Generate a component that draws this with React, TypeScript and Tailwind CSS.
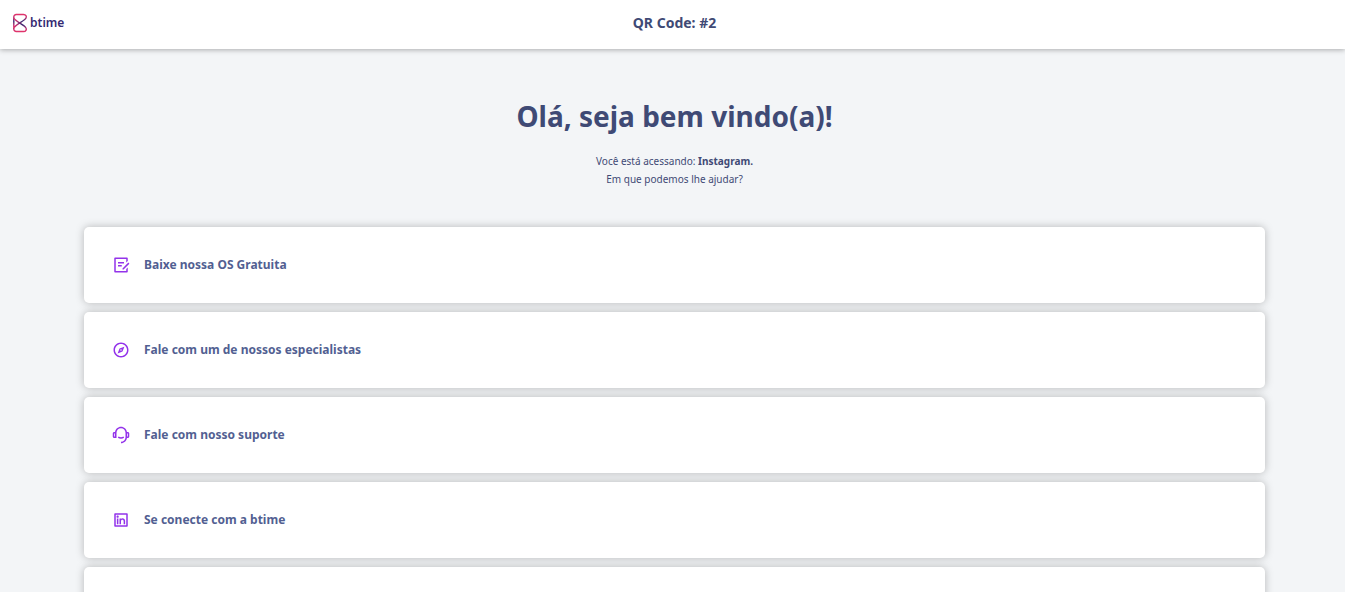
import type { IconType } from "react-icons";
import {
  RiCompass3Line,
  RiCustomerService2Line,
  RiDraftLine,
  RiInstagramLine,
  RiLinkedinBoxLine,
} from "react-icons/ri";

type Option = {
  label: string;
  icon: IconType;
};

const options: Option[] = [
  { label: "Baixe nossa OS Gratuita", icon: RiDraftLine },
  { label: "Fale com um de nossos especialistas", icon: RiCompass3Line },
  { label: "Fale com nosso suporte", icon: RiCustomerService2Line },
  { label: "Se conecte com a btime", icon: RiLinkedinBoxLine },
  { label: "Siga a btime no Instagram", icon: RiInstagramLine },
];

const Logo = () => (
  <a href="#" className="flex items-center gap-[2px] text-[#352a72]">
    <svg width="16" height="20" viewBox="0 0 16 20" fill="none" aria-hidden="true">
      <defs>
        <linearGradient id="logo" x1="0" y1="0" x2="0" y2="1">
          <stop offset="0" stopColor="#e0336b" />
          <stop offset="0.2" stopColor="#c42e70" />
          <stop offset="0.5" stopColor="#352a72" />
          <stop offset="0.8" stopColor="#c42e70" />
          <stop offset="1" stopColor="#e0336b" />
        </linearGradient>
      </defs>
      <path
        d="M4.300 1.500H11.500C14 1.500 14.800 3.500 14 5C12.500 8 3.500 11.500 1.800 15V4C1.800 2.500 2.800 1.500 4.300 1.500Z"
        stroke="url(#logo)"
        strokeWidth="1.400"
        strokeLinejoin="round"
      />
      <path
        d="M1.800 5C3.500 8.500 12.500 12 14 15C14.800 16.500 14 18.500 11.500 18.500H4.300C2.800 18.500 1.800 17.500 1.800 16V15"
        stroke="url(#logo)"
        strokeWidth="1.400"
        strokeLinejoin="round"
      />
    </svg>
    <span className="text-[12px] leading-5 font-semibold">btime</span>
  </a>
);

const OptionCard = ({ label, icon: Icon }: Option) => (
  <button
    type="button"
    className="flex h-[76px] w-full cursor-pointer items-center gap-[14px] rounded-[5px] bg-white px-7 text-left shadow-[0_0_8px_rgba(0,0,0,0.25)]"
  >
    <Icon className="size-[18px] shrink-0 text-[#9333ea]" />
    <span className="text-[12px] leading-5 font-bold text-[#525f92]">
      {label}
    </span>
  </button>
);

export default function App() {
  return (
    <div className="min-h-screen bg-[#f3f5f7] font-['Noto_Sans',sans-serif] text-[#3f4a75]">
      <header className="grid h-[49px] grid-cols-[1fr_auto_1fr] items-center bg-white pr-2 pb-[3px] pl-3 shadow-[0_1px_5px_rgba(0,0,0,0.3)]">
        <Logo />
        <p className="text-[14px] leading-5 font-bold">QR Code: #2</p>
      </header>

      <main className="pt-[47px] pr-20 pb-10 pl-[84px]">
        <div className="text-center">
          <h1 className="text-[28px] leading-10 font-bold">
            Olá, seja bem vindo(a)!
          </h1>
          <p className="mt-4 text-[10px] leading-[18px]">
            Você está acessando: <strong>Instagram.</strong>
            <br />
            Em que podemos lhe ajudar?
          </p>
        </div>

        <div className="mt-[39px] flex flex-col gap-[9px]">
          {options.map((option) => (
            <OptionCard key={option.label} {...option} />
          ))}
        </div>
      </main>
    </div>
  );
}
